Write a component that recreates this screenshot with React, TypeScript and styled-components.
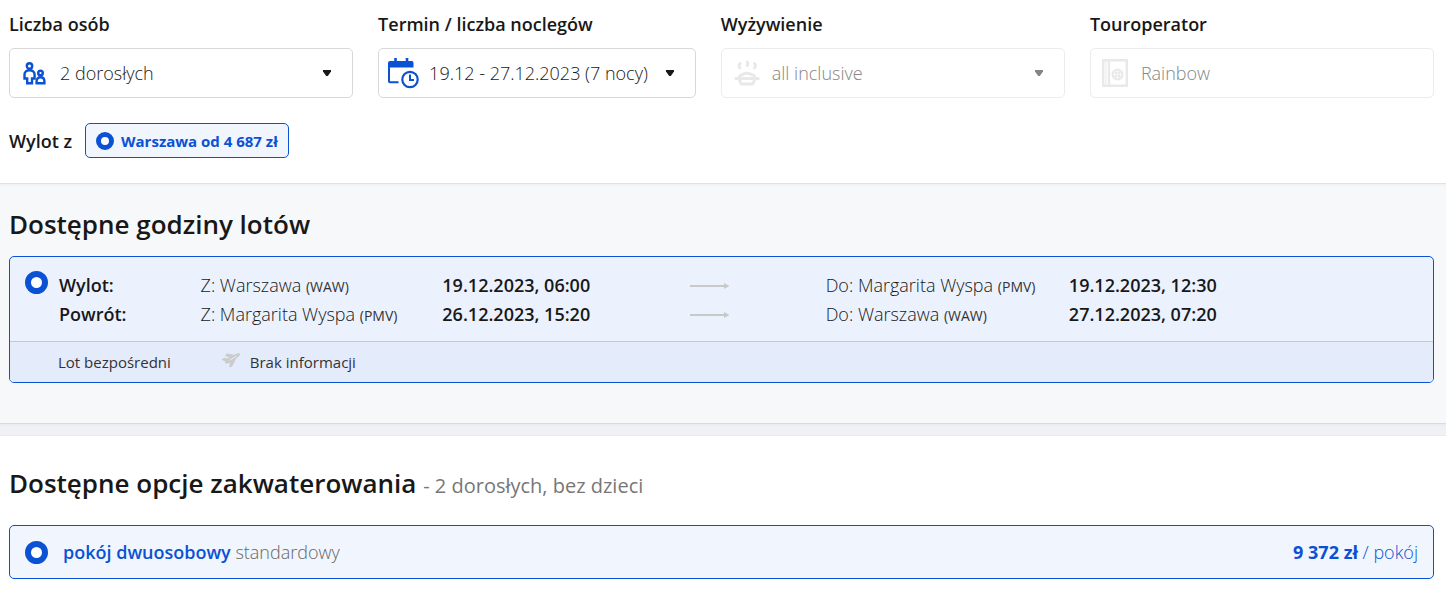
import React from "react";
import styled, { createGlobalStyle, css } from "styled-components";

const blue = "#0b51d3";
const ink = "#181818";

const GlobalStyle = createGlobalStyle`
  *, *::before, *::after { box-sizing: border-box; }
  body {
    margin: 0;
    background: #fff;
    color: ${ink};
    font-family: "Open Sans", "Noto Sans", sans-serif;
    font-weight: 300;
    font-size: 18px;
    line-height: 24px;
  }
  button, input, select { font: inherit; color: inherit; margin: 0; }
`;

const Filters = styled.form`
  padding: 12px 12px 25px 9px;
`;

const FieldGrid = styled.div`
  display: grid;
  grid-template-columns: 13fr 12fr 13fr 13fr;
  gap: 25px;
`;

const Field = styled.div`
  display: flex;
  flex-direction: column;
  gap: 12px;
  min-width: 0;
`;

const FieldLabel = styled.label`
  font-weight: 600;
`;

const Control = styled.div<{ $muted?: boolean }>`
  display: grid;
  align-items: center;
  height: 50px;
  border: 1px solid ${(p) => (p.$muted ? "#ececec" : "#d8d8d8")};
  border-radius: 5px;
  background: #fff;
  color: ${(p) => (p.$muted ? "#858585" : ink)};

  > * { grid-area: 1 / 1; }
  > svg { pointer-events: none; }
`;

const controlText = css`
  width: 100%;
  height: 100%;
  padding: 0 50px;
  border: 0;
  border-radius: 5px;
  background: none;
  color: inherit;
  opacity: 1;
  text-align: left;
`;

const SelectBox = styled.select`
  ${controlText}
  appearance: none;
`;
const PickerButton = styled.button`
  ${controlText}
  padding-right: 40px;
  white-space: nowrap;
`;
const TextBox = styled.input`
  ${controlText}
`;

const IconSlot = styled.svg<{ $inset: number }>`
  margin-left: ${(p) => p.$inset}px;
`;

const Caret = styled.svg`
  justify-self: end;
  margin-right: 21px;
`;

const Departure = styled.div`
  display: flex;
  align-items: center;
  gap: 13px;
  margin-top: 25px;
`;

const DepartureTitle = styled.span`
  font-weight: 600;
`;

const Chip = styled.label`
  display: flex;
  align-items: center;
  gap: 7px;
  height: 35px;
  padding: 0 10px;
  border: 1px solid ${blue};
  border-radius: 5px;
  background: #f0f5fe;
  color: ${blue};
  font-size: 15px;
  font-weight: 700;
`;

const Radio = styled.input<{ $small?: boolean }>`
  appearance: none;
  flex: none;
  width: ${(p) => (p.$small ? 18 : 23)}px;
  height: ${(p) => (p.$small ? 18 : 23)}px;
  border: ${(p) => (p.$small ? 5 : 6)}px solid ${blue};
  border-radius: 50%;
  background: #fff;
`;

const Flights = styled.section`
  padding: 22px 12px 40px 9px;
  border-top: 1px solid #dfe1e4;
  border-bottom: 1px solid #d9dbde;
  background: #f7f8fa;
  box-shadow: inset 0 2px 2px #f1f2f4;
`;

const Heading = styled.h2`
  margin: 0;
  font-size: 26px;
  font-weight: 600;
  line-height: 36px;
`;

const FlightCard = styled.div`
  margin-top: 14px;
  overflow: hidden;
  border: 1px solid ${blue};
  border-radius: 5px;
  background: #ebf2fe;
`;

const FlightMain = styled.div`
  display: flex;
  align-items: flex-start;
  gap: 11px;
  padding: 14px 0 12px 15px;
`;

const FlightTable = styled.table`
  flex: 1;
  table-layout: fixed;
  border-collapse: collapse;
  text-align: left;

  th, td {
    height: 29px;
    padding: 2px 0 0;
    vertical-align: baseline;
    white-space: nowrap;
  }
  th { font-weight: 600; }
`;

const ArrowCell = styled.td`
  && { vertical-align: middle; padding: 0; }
  svg { display: block; }
`;

const Col = styled.col<{ $share?: number }>`
  width: ${(p) => (p.$share ? `${p.$share}%` : "auto")};
`;

const Strong = styled.strong`
  font-weight: 600;
`;

const Code = styled.small`
  color: #333;
  font-size: 14px;
  font-weight: 400;
`;

const FlightNotes = styled.div`
  display: flex;
  align-items: center;
  gap: 50px;
  height: 41px;
  padding-left: 48px;
  border-top: 1px solid #c6c9d2;
  background: #e4ebfb;
  color: #333;
  font-size: 15px;
  font-weight: 400;
`;

const Note = styled.span`
  display: flex;
  align-items: center;
  gap: 9px;
`;

const Divider = styled.div`
  height: 12px;
  border-bottom: 1px solid #e9ebee;
  background: linear-gradient(#e9ebee, #eff1f5 3px);
`;

const Rooms = styled.section`
  padding: 29px 12px 25px 9px;
`;

const Subtitle = styled.span`
  color: #777;
  font-size: 20px;
  font-weight: 400;
`;

const RoomCard = styled.label`
  display: flex;
  align-items: center;
  gap: 15px;
  height: 54px;
  margin-top: 21px;
  padding: 0 15px;
  border: 1px solid ${blue};
  border-radius: 5px;
  background: #f0f5fe;
`;

const RoomName = styled.span`
  flex: 1;
  color: #666;

  strong { color: ${blue}; font-weight: 600; }
`;

const Price = styled.span`
  color: ${blue};

  strong { font-weight: 700; }
`;

const PeopleIcon = () => (
  <IconSlot $inset={13} width="23" height="24" viewBox="0 0 23 24" fill="none" stroke={blue} strokeWidth="2.400" aria-hidden="true">
    <circle cx="6.500" cy="5" r="2.700" />
    <path d="M4.200 22.300V17.500H1.500v-4C1.500 11 3.600 9.300 6.500 9.300s5.100 1.700 5.100 4.200v4H9v4.800z" />
    <circle cx="17.500" cy="12" r="2.300" />
    <path d="M13.600 22.300v-2c0-2.400 1.600-4 3.900-4s3.900 1.600 3.900 4v2z" />
  </IconSlot>
);

const CalendarIcon = () => (
  <IconSlot $inset={9} width="31" height="31" viewBox="0 0 31 31" fill="none" stroke={blue} aria-hidden="true">
    <path d="M0 5q0-2 2-2h22q1.500 0 1.500 2v4.500H0z" fill={blue} stroke="none" />
    <path d="M7.500 0v6M19 0v6" strokeWidth="2.600" />
    <path d="M1 8v15.200q0 1 1 1h8.500" strokeWidth="2" />
    <circle cx="22" cy="21.500" r="7.700" strokeWidth="2.200" />
    <path d="M22 16.500v5.500h4" strokeWidth="2" />
  </IconSlot>
);

const MealIcon = () => (
  <IconSlot $inset={12} width="26" height="26" viewBox="0 0 26 26" fill="none" stroke="#e9e9e9" strokeWidth="3" strokeLinecap="round" strokeLinejoin="round" aria-hidden="true">
    <path d="M6 3.500c-1.200 1.300-1.200 3 0 4.500M13.200 2c.9 1.200.9 2.200 0 3.500M20.500 3.500c1.200 1.300 1.200 3 0 4.500" />
    <path d="M1.800 18.500h22.400M5 18c0-2.300 2-3.500 4-3.500 1-1.800 7-1.800 8 0 2 0 4 1.200 4 3.500M5 19l2.200 5h11.600l2.200-5" />
  </IconSlot>
);

const PassportIcon = () => (
  <IconSlot $inset={11} width="26" height="28" viewBox="0 0 26 28" fill="none" stroke="#e9e9e9" aria-hidden="true">
    <path d="M1.200 1.200h23.600v25.600H1.200zM7 1v26" strokeWidth="2.400" />
    <path d="M4 2v24" strokeWidth="1" />
    <circle cx="15.500" cy="15.500" r="5" strokeWidth="2" />
    <path d="M10.500 13.800h10M10.500 17.200h10M14 11v9M17 11v9" strokeWidth="1.300" />
  </IconSlot>
);

const DownCaret = () => (
  <Caret width="8" height="6" viewBox="0 0 8 6" fill="currentColor" aria-hidden="true">
    <path d="M0 0h8v1.500L4.800 6H3.200L0 1.500z" />
  </Caret>
);

const ArrowIcon = () => (
  <svg width="40" height="7" viewBox="0 0 40 7" fill="#c9c9c9" role="img" aria-label="do">
    <path d="M0 3h34V1L39.500 4 34 7V5H0z" />
  </svg>
);

const PlaneIcon = () => (
  <svg width="20" height="18" viewBox="0 0 20 18" fill="#cbcbcb" stroke="#cbcbcb" strokeWidth="1" strokeLinejoin="round" aria-hidden="true">
    <path d="M1 6.500L3.800 5.200 7 6l2-1.200L4.500 2.300 6 1l7 1.300L16.500.8c1.700-.6 3 .2 1.800 1.500L14.800 5.200 11 13l-2.200 1 .6-5.200-3.600 1.500-1.600-.8 1-1.300z" />
    <path d="M8.500 7.300L15.500 3" stroke="#e4ebfb" strokeWidth="1" />
  </svg>
);

const flights = [
  { kind: "Wylot:", from: "Warszawa", fromCode: "WAW", leaves: "19.12.2023, 06:00", to: "Margarita Wyspa", toCode: "PMV", lands: "19.12.2023, 12:30" },
  { kind: "Powrót:", from: "Margarita Wyspa", fromCode: "PMV", leaves: "26.12.2023, 15:20", to: "Warszawa", toCode: "WAW", lands: "27.12.2023, 07:20" },
];

export default function App() {
  return (
    <>
      <GlobalStyle />
      <main>
        <Filters>
          <FieldGrid>
            <Field>
              <FieldLabel htmlFor="people">Liczba osób</FieldLabel>
              <Control>
                <SelectBox id="people"><option>2 dorosłych</option></SelectBox>
                <PeopleIcon />
                <DownCaret />
              </Control>
            </Field>
            <Field>
              <FieldLabel htmlFor="dates">Termin / liczba noclegów</FieldLabel>
              <Control>
                <PickerButton id="dates" type="button">19.12 - 27.12.2023 (7 nocy)</PickerButton>
                <CalendarIcon />
                <DownCaret />
              </Control>
            </Field>
            <Field>
              <FieldLabel htmlFor="meals">Wyżywienie</FieldLabel>
              <Control $muted>
                <SelectBox id="meals" disabled><option>all inclusive</option></SelectBox>
                <MealIcon />
                <DownCaret />
              </Control>
            </Field>
            <Field>
              <FieldLabel htmlFor="operator">Touroperator</FieldLabel>
              <Control $muted>
                <TextBox id="operator" defaultValue="Rainbow" disabled />
                <PassportIcon />
              </Control>
            </Field>
          </FieldGrid>
          <Departure>
            <DepartureTitle>Wylot z</DepartureTitle>
            <Chip>
              <Radio $small type="radio" name="airport" defaultChecked />
              Warszawa od 4 687 zł
            </Chip>
          </Departure>
        </Filters>

        <Flights>
          <Heading>Dostępne godziny lotów</Heading>
          <FlightCard>
            <FlightMain>
              <Radio type="radio" name="flight" aria-label="Wybierz lot" defaultChecked />
              <FlightTable>
                <colgroup>
                  <Col $share={10.3} />
                  <Col $share={17.6} />
                  <Col $share={18} />
                  <Col $share={9.9} />
                  <Col $share={17.7} />
                  <Col />
                </colgroup>
                <tbody>
                  {flights.map((f) => (
                    <tr key={f.kind}>
                      <th scope="row">{f.kind}</th>
                      <td>Z: {f.from} <Code>({f.fromCode})</Code></td>
                      <td><Strong>{f.leaves}</Strong></td>
                      <ArrowCell><ArrowIcon /></ArrowCell>
                      <td>Do: {f.to} <Code>({f.toCode})</Code></td>
                      <td><Strong>{f.lands}</Strong></td>
                    </tr>
                  ))}
                </tbody>
              </FlightTable>
            </FlightMain>
            <FlightNotes>
              <Note>Lot bezpośredni</Note>
              <Note><PlaneIcon /> Brak informacji</Note>
            </FlightNotes>
          </FlightCard>
        </Flights>
        <Divider />

        <Rooms>
          <Heading>Dostępne opcje zakwaterowania <Subtitle>- 2 dorosłych, bez dzieci</Subtitle></Heading>
          <RoomCard>
            <Radio type="radio" name="room" defaultChecked />
            <RoomName><strong>pokój dwuosobowy</strong> standardowy</RoomName>
            <Price><strong>9 372 zł</strong> / pokój</Price>
          </RoomCard>
        </Rooms>
      </main>
    </>
  );
}
